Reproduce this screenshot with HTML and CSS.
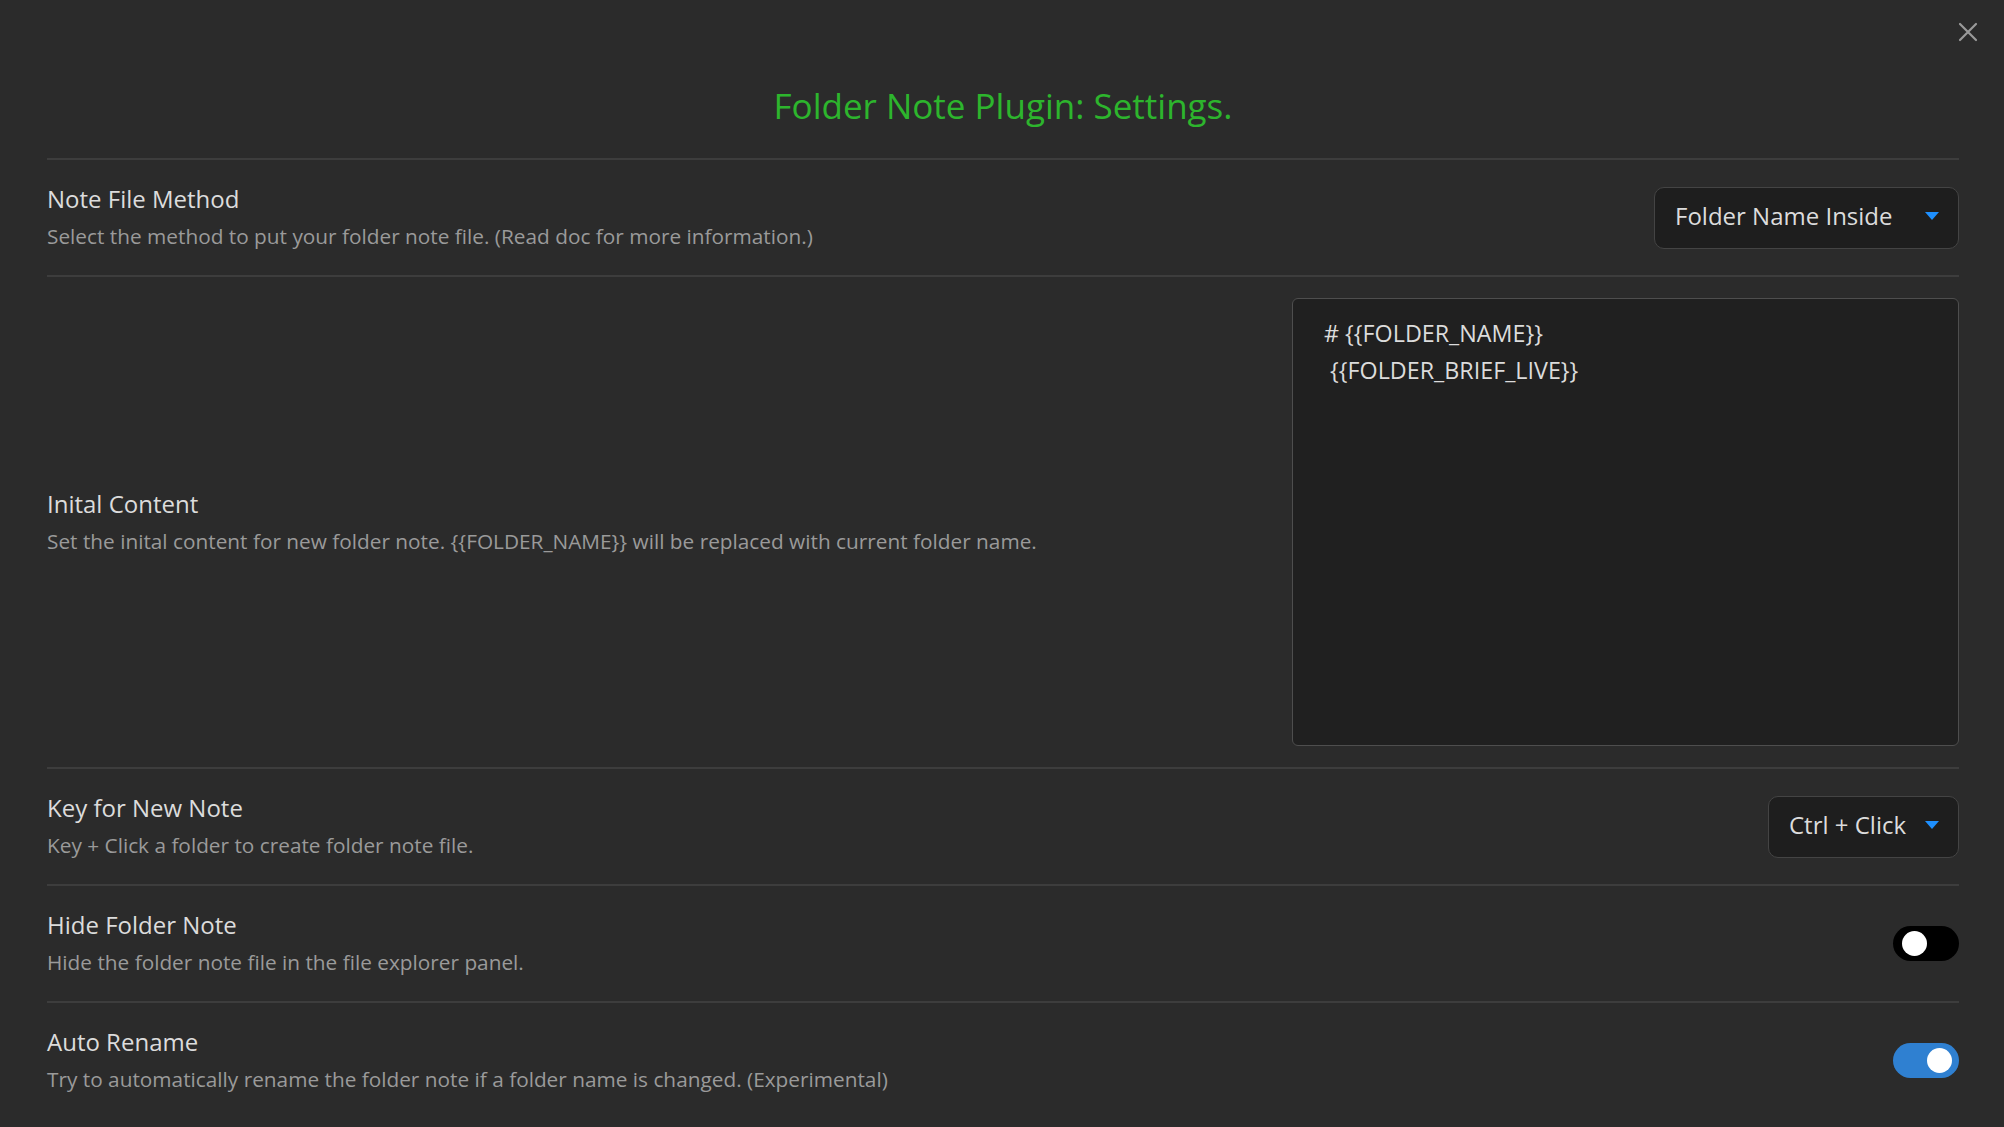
FILE: index.html
```html
<!DOCTYPE html>
<html lang="en">
<head>
<meta charset="utf-8">
<title>Folder Note Plugin: Settings.</title>
<link rel="stylesheet" href="styles.css">
</head>
<body>
<div class="modal">
  <button class="close" aria-label="Close">
    <svg width="20" height="20" viewBox="0 0 20 20"><path d="M2 2 L18 18 M18 2 L2 18" stroke="#9a9a9a" stroke-width="2.2" fill="none" stroke-linecap="round"/></svg>
  </button>
  <h2 class="title">Folder Note Plugin: Settings.</h2>

  <div class="setting">
    <div class="info">
      <div class="name">Note File Method</div>
      <div class="desc">Select the method to put your folder note file. (Read doc for more information.)</div>
    </div>
    <div class="dropdown dropdown-wide"><span>Folder Name Inside</span><span class="caret"></span></div>
  </div>

  <div class="setting setting-tall">
    <div class="info">
      <div class="name">Inital Content</div>
      <div class="desc">Set the inital content for new folder note. {{FOLDER_NAME}} will be replaced with current folder name.</div>
    </div>
    <div class="textarea"># {{FOLDER_NAME}}
 {{FOLDER_BRIEF_LIVE}}</div>
  </div>

  <div class="setting">
    <div class="info">
      <div class="name">Key for New Note</div>
      <div class="desc">Key + Click a folder to create folder note file.</div>
    </div>
    <div class="dropdown dropdown-narrow"><span>Ctrl + Click</span><span class="caret"></span></div>
  </div>

  <div class="setting">
    <div class="info">
      <div class="name">Hide Folder Note</div>
      <div class="desc">Hide the folder note file in the file explorer panel.</div>
    </div>
    <div class="toggle"><span class="knob"></span></div>
  </div>

  <div class="setting">
    <div class="info">
      <div class="name">Auto Rename</div>
      <div class="desc">Try to automatically rename the folder note if a folder name is changed. (Experimental)</div>
    </div>
    <div class="toggle toggle-on"><span class="knob"></span></div>
  </div>
</div>
</body>
</html>
```
FILE: styles.css
```css
html, body {
  margin: 0;
  padding: 0;
  background: #2b2b2b;
  height: 100%;
  overflow: hidden;
}
body {
  font-family: "Open Sans", "Noto Sans", sans-serif;
  color: #dcdcdc;
}
.modal {
  position: relative;
  display: flow-root;
  padding: 0 45px 0 47px;
}
.close {
  position: absolute;
  top: 22px;
  right: 26px;
  width: 20px;
  height: 20px;
  padding: 0;
  border: 0;
  background: transparent;
  display: flex;
}
.title {
  margin: 82px 0 28px;
  font-size: 35px;
  line-height: 48px;
  font-weight: 400;
  text-align: center;
  color: #2db52d;
}
.setting {
  display: flex;
  align-items: center;
  justify-content: space-between;
  border-top: 2px solid #3d3d3d;
  padding: 21px 0;
}
.info {
  display: flex;
  flex-direction: column;
  gap: 8px;
  padding: 3px 0 4px;
}
.name {
  font-size: 24px;
  line-height: 30px;
  color: #dcdcdc;
}
.desc {
  font-size: 20.8px;
  line-height: 28px;
  color: #9a9a9a;
}
.dropdown {
  box-sizing: border-box;
  height: 62px;
  display: flex;
  align-items: center;
  justify-content: space-between;
  background: #1e1e1e;
  border: 1.5px solid #444;
  border-radius: 10px;
  padding: 0 19px 4px 20px;
  font-size: 24px;
  color: #dcdcdc;
}
.dropdown-wide { width: 305px; }
.dropdown-narrow { width: 191px; }
.caret {
  width: 0;
  height: 0;
  border-left: 7px solid transparent;
  border-right: 7px solid transparent;
  border-top: 8px solid #1e90ff;
  margin-top: 0;
}
.textarea {
  box-sizing: border-box;
  width: 667px;
  height: 448px;
  background: #202020;
  border: 1.5px solid #4e4e4e;
  border-radius: 6px;
  padding: 16px 31px;
  font-size: 23.3px;
  line-height: 37px;
  white-space: pre;
  color: #dcdcdc;
}
.toggle {
  position: relative;
  width: 66px;
  height: 35px;
  border-radius: 18px;
  background: #000;
  flex: none;
}
.knob {
  position: absolute;
  top: 5px;
  left: 9px;
  width: 25px;
  height: 25px;
  border-radius: 50%;
  background: #fff;
}
.toggle-on {
  background: #2f80d1;
}
.toggle-on .knob {
  left: auto;
  right: 7px;
}
```
